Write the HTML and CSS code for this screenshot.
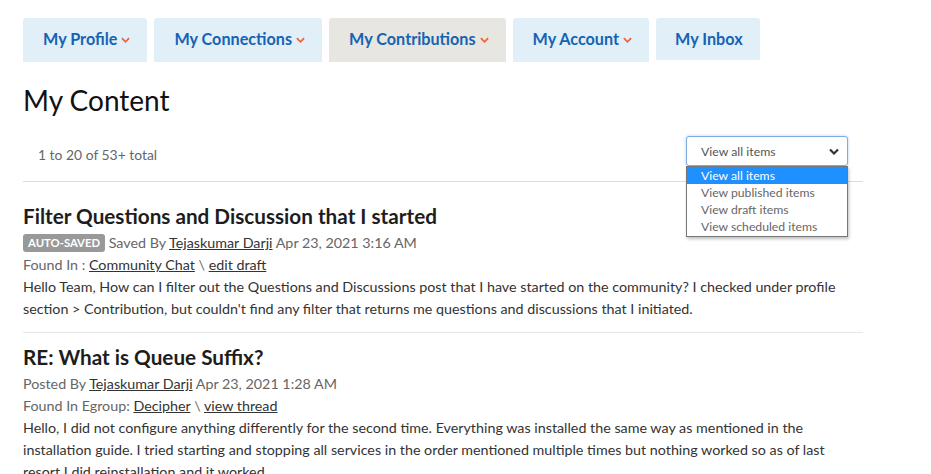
FILE: index.html
```html
<!DOCTYPE html>
<html lang="en">
<head>
<meta charset="utf-8">
<title>My Content</title>
<link rel="stylesheet" href="styles.css">
</head>
<body>
<div class="page">
  <nav class="tabs">
    <a class="tab">My Profile<svg class="chev" viewBox="0 0 10 6"><path d="M1 1l4 4 4-4"/></svg></a>
    <a class="tab">My Connections<svg class="chev" viewBox="0 0 10 6"><path d="M1 1l4 4 4-4"/></svg></a>
    <a class="tab active">My Contributions<svg class="chev" viewBox="0 0 10 6"><path d="M1 1l4 4 4-4"/></svg></a>
    <a class="tab">My Account<svg class="chev" viewBox="0 0 10 6"><path d="M1 1l4 4 4-4"/></svg></a>
    <a class="tab short">My Inbox</a>
  </nav>

  <h1 class="title">My Content</h1>

  <div class="toolbar">
    <div class="count">1 to 20 of 53+ total</div>
    <div class="select-wrap">
      <div class="select">
        <span>View all items</span>
        <svg class="sel-chev" viewBox="0 0 10 6"><path d="M1 1l4 4 4-4"/></svg>
      </div>
      <ul class="options">
        <li class="selected">View all items</li>
        <li>View published items</li>
        <li>View draft items</li>
        <li>View scheduled items</li>
      </ul>
    </div>
  </div>

  <div class="posts">
    <article class="post">
      <h2 class="post-title">Filter Questions and Discussion that I started</h2>
      <div class="meta"><span class="badge">AUTO-SAVED</span> Saved By <a class="link">Tejaskumar Darji</a> Apr 23, 2021 3:16 AM</div>
      <div class="meta">Found In : <a class="link">Community Chat</a> \ <a class="link">edit draft</a></div>
      <p class="body">Hello Team, How can I filter out the Questions and Discussions post that I have started on the community? I checked under profile section &gt; Contribution, but couldn't find any filter that returns me questions and discussions that I initiated.</p>
    </article>
    <article class="post">
      <h2 class="post-title">RE: What is Queue Suffix?</h2>
      <div class="meta">Posted By <a class="link">Tejaskumar Darji</a> Apr 23, 2021 1:28 AM</div>
      <div class="meta">Found In Egroup: <a class="link">Decipher</a> \ <a class="link">view thread</a></div>
      <p class="body">Hello, I did not configure anything differently for the second time. Everything was installed the same way as mentioned in the installation guide. I tried starting and stopping all services in the order mentioned multiple times but nothing worked so as of last resort I did reinstallation and it worked.</p>
    </article>
  </div>
</div>
</body>
</html>
```

FILE: styles.css
```css
* { box-sizing: border-box; }
html, body { margin: 0; padding: 0; background: #fff; }
body {
  font-family: "Lato", "Noto Sans", sans-serif;
  color: #222;
  overflow: hidden;
}
.page {
  padding: 18px 23px 0 23px;
  width: 885px;
}
.tabs {
  display: flex;
  align-items: flex-start;
  gap: 7px;
}
.tab {
  display: flex;
  align-items: center;
  height: 44px;
  padding: 0 17px 4px 20px;
  background: #e1f0f8;
  border-radius: 3px 3px 0 0;
  color: #1763b3;
  font-weight: 700;
  font-size: 16.2px;
  text-decoration: none;
}
.tab.active { background: #e8e6e0; }
.tab.short { height: 42px; padding: 0 17px 2px 19px; }
.chev {
  width: 9px;
  height: 6px;
  margin-left: 4px;
  margin-top: 3px;
  fill: none;
  stroke: #f0643c;
  stroke-width: 2;
}
.title {
  margin: 22px 0 0 0;
  font-size: 28px;
  font-weight: 400;
  line-height: 32px;
  color: #111;
}
.toolbar {
  margin-top: 20px;
  display: flex;
  justify-content: space-between;
  align-items: flex-start;
  border-bottom: 1px solid #ddd;
  padding: 0 15px 15px 15px;
  width: 840px;
  position: relative;
}
.count {
  padding-top: 10px;
  font-size: 13.9px;
  color: #666;
}
.select-wrap {
  position: relative;
  width: 162px;
}
.select {
  height: 30px;
  border: 1px solid #7eaee0;
  border-radius: 3px;
  box-shadow: 0 0 3px rgba(102, 160, 230, 0.5);
  display: flex;
  align-items: center;
  justify-content: space-between;
  padding: 0 8px 0 14px;
  font-size: 12.3px;
  color: #555;
  background: #fff;
}
.sel-chev {
  width: 10px;
  height: 7px;
  fill: none;
  stroke: #333;
  stroke-width: 2.2;
}
.options {
  position: absolute;
  top: 30px;
  left: 0;
  width: 162px;
  margin: 0;
  padding: 0 0 1px 0;
  list-style: none;
  background: #fff;
  border: 1px solid #777;
  box-shadow: 1px 2px 3px rgba(0,0,0,0.25);
  font-size: 12.2px;
  color: #666;
  z-index: 2;
}
.options li {
  height: 17px;
  line-height: 17px;
  padding-left: 14px;
}
.options li.selected {
  background: #1e90ff;
  color: #fff;
}
.posts {
  margin-top: 9px;
  width: 840px;
}
.post {
  padding: 9px 0 12px 0;
  border-bottom: 1px solid #e6e6e6;
}
.post + .post { padding-top: 8px; }
.post-title {
  margin: 0;
  font-size: 20.7px;
  line-height: 32px;
  font-weight: 700;
  color: #1d1d1d;
}
.meta {
  font-size: 14.3px;
  line-height: 22px;
  color: #666;
}
.link {
  color: #333;
  text-decoration: underline;
}
.badge {
  display: inline-block;
  background: #999;
  color: #fff;
  font-weight: 700;
  font-size: 11.3px;
  line-height: 18px;
  padding: 0 5px;
  border-radius: 3px;
  vertical-align: 1px;
}
.body {
  margin: 0;
  font-size: 14.3px;
  line-height: 22px;
  color: #333;
}
```
